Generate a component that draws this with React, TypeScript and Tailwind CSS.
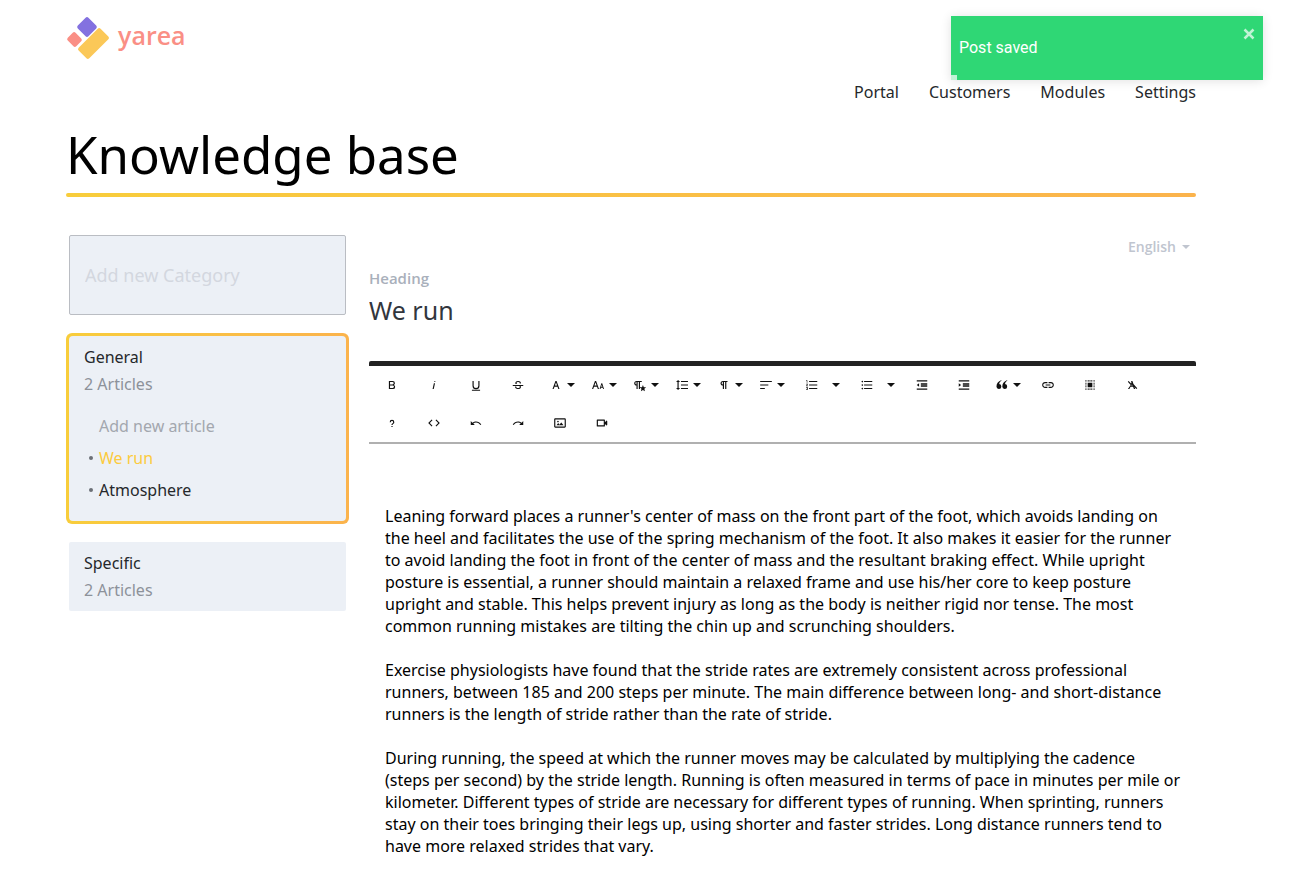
import React, { useState } from 'react';
import {
  MdFormatListNumbered,
  MdFormatListBulleted,
  MdInsertLink,
} from 'react-icons/md';

const glyph = (d: string) => () => (
  <svg viewBox="0 0 24 24" className="size-3.5" fill="currentColor" aria-hidden="true">
    <path d={d} />
  </svg>
);

const Bold = glyph('M15.25,11.8h0A3.68,3.68,0,0,0,17,9a3.93,3.93,0,0,0-3.86-4H6.65V19h7a3.74,3.74,0,0,0,3.7-3.78V15.1A3.64,3.64,0,0,0,15.25,11.8ZM8.65,7h4.2a2.09,2.09,0,0,1,2,1.3,2.09,2.09,0,0,1-1.37,2.61,2.23,2.23,0,0,1-.63.09H8.65Zm4.6,10H8.65V13h4.6a2.09,2.09,0,0,1,2,1.3,2.09,2.09,0,0,1-1.37,2.61A2.23,2.23,0,0,1,13.25,17Z');
const Italic = glyph('M11.76,9h2l-2.2,10h-2Zm1.68-4a1,1,0,1,0,1,1,1,1,0,0,0-1-1Z');
const Underline = glyph('M19,20v2H5V20ZM16,5v8.2a4,4,0,0,1-8,0V5H6v8.2a6,6,0,0,0,12,0V5Z');
const Strike = glyph('M3,12.2H21v1.5H16.63a3.6,3.6,0,0,1,.35,1.6,3.25,3.25,0,0,1-1.31,2.7A5.55,5.55,0,0,1,12.2,19a6.44,6.44,0,0,1-2.62-.54,4.46,4.46,0,0,1-1.89-1.49,3.67,3.67,0,0,1-.67-2.15V14.7H9.02v.11a2.18,2.18,0,0,0,.85,1.83,3.69,3.69,0,0,0,2.33.68,3.39,3.39,0,0,0,2.08-.55,1.73,1.73,0,0,0,.7-1.47,1.7,1.7,0,0,0-.65-1.43l-.27-.17H3ZM16.34,7.06A4.18,4.18,0,0,0,14.62,5.55,5.63,5.63,0,0,0,12.11,5,5.16,5.16,0,0,0,8.75,6.06,3.36,3.36,0,0,0,7.44,8.77a3.23,3.23,0,0,0,.32,1.43h2.6l-.25-.16a1.6,1.6,0,0,1-.65-1.3,1.8,1.8,0,0,1,.69-1.51,3.13,3.13,0,0,1,1.97-.55,3.05,3.05,0,0,1,2.1.67,2.35,2.35,0,0,1,.74,1.83v.11h2V9.17A3.9,3.9,0,0,0,16.34,7.06Z');
const FontFamily = glyph('M16,19h2L13,5H11L6,19H8l1.43-4h5.15Zm-5.86-6L12,7.8,13.86,13Z');
const FontSize = glyph('M20.75,19h1.5l-3-10h-1.5l-3,10h1.5L17,16.5h3Zm-3.3-4,1.05-3.5L19.55,15Zm-5.7,4h2l-5-14h-2l-5,14h2l1.43-4h5.15ZM5.89,13,7.75,7.8,9.61,13Z');
const ParagraphStyle = glyph('M6.15,5A4.11,4.11,0,0,0,2.08,8.18,4,4,0,0,0,6,13v6h2V7h2v12h2V7h3V5ZM4,9a2,2,0,0,1,2-2v4A2,2,0,0,1,4,9ZM17,20.5l3.4,2-.9-3.9,3-2.6-4-.3L17,12l-1.5,3.7-4,.3,3,2.6-.9,3.9Z');
const LineHeight = glyph('M6.25,7h2.5L5.25,3.5,1.75,7h2.5V17H1.75l3.5,3.5L8.75,17H6.25Zm4-2V7h12V5Zm0,14h12V17h-12Zm0-6h12V11h-12Z');
const Pilcrow = glyph('M10.15,5A4.11,4.11,0,0,0,6.08,8.18,4,4,0,0,0,10,13v6h2V7h2V19h2V7h2V5ZM8,9a2,2,0,0,1,2-2v4A2,2,0,0,1,8,9Z');
const AlignLeft = glyph('M2,5h20v2H2ZM2,11h14v2H2ZM2,17h8v2H2Z');
const Outdent = glyph('M3,4H21V6H3ZM3,18H21v2H3ZM10,9H21v2.5H10ZM10,12.5H21V15H10ZM3,12l4-3v6Z');
const Indent = glyph('M3,4H21V6H3ZM3,18H21v2H3ZM10,9H21v2.5H10ZM10,12.5H21V15H10ZM7,12,3,9v6Z');
const Quote = glyph('M10.5,4C6,5.5,2.5,9.5,2.5,14.5a4.2,4.2,0,1,0,4.7-4.2C7.5,8,8.8,6,11.3,4.8ZM20.5,4c-4.5,1.5-8,5.5-8,10.5a4.2,4.2,0,1,0,4.7-4.2c.3-2.3,1.6-4.3,4.1-5.5Z');
const SelectAll = glyph('M8,8h8v8H8ZM4,4h2v2H4ZM8,4h2v2H8ZM11,4h2v2h-2ZM14,4h2v2h-2ZM18,4h2v2h-2ZM4,8h2v2H4ZM4,11h2v2H4ZM4,14h2v2H4ZM18,8h2v2h-2ZM18,11h2v2h-2ZM18,14h2v2h-2ZM4,18h2v2H4ZM8,18h2v2H8ZM11,18h2v2h-2ZM14,18h2v2h-2ZM18,18h2v2h-2Z');
const ClearFormat = glyph('M10.5,5h2.2l1.8,5.2,6.5,7.3L19.5,19l-3.3-3.7L17.5,19h-2.2l-1.5-4.2H9.5L7.5,19H5l4.8-7.2L4.8,6.3,6.3,5l4,4.4,.7-1ZM11.8,11l-1.1,2h2.5Z');
const Help = glyph('M11,17h2v2H11Zm2-1.5H11c0-3.25,3-3,3-5a2,2,0,0,0-4,0H8a4,4,0,0,1,8,0C16,13,13,13.25,13,15.5Z');
const Code = glyph('M9.4,16.6,4.8,12,9.4,7.4,8,6,2,12l6,6Zm5.2,0L19.2,12,14.6,7.4,16,6l6,6-6,6Z');
const Undo = glyph('M10.4 9.4c-1.7.3-3.2.9-4.6 2L3 8.5v7h7l-2.7-2.7c3.7-2.6 8.8-1.8 11.5 1.9.2.3.4.5.5.8l1.8-.9c-2.5-4.3-6.7-5.9-10.7-5.2z');
const Redo = glyph('M13.6 9.4c1.7.3 3.2.9 4.6 2L21 8.5v7h-7l2.7-2.7C13 10.1 7.9 11 5.3 14.7c-.2.3-.4.5-.5.8L3 14.6C5.1 10.8 9.5 8.7 13.6 9.4z');
const Picture = glyph('M14.2,11l3.8,5H6l3-3.9l2.1,2.7L14,11H14.2z M8.5,11c0.8,0,1.5-0.7,1.5-1.5S9.3,8,8.5,8S7,8.7,7,9.5C7,10.3,7.7,11,8.5,11z M22,6v12c0,1.1-0.9,2-2,2H4c-1.1,0-2-0.9-2-2V6c0-1.1,0.9-2,2-2h16C21.1,4,22,4.8,22,6z M20,8.8V6H4v12h16V8.8z');
const Video = glyph('M15,8v8H5V8H15m2,2.5V7a1,1,0,0,0-1-1H4A1,1,0,0,0,3,7V17a1,1,0,0,0,1,1H16a1,1,0,0,0,1-1V13.5l2.29,2.29A1,1,0,0,0,21,15.08V8.91a1,1,0,0,0-1.71-.71Z');

type Tool = { label: string; icon: React.ElementType; kind?: 'menu' | 'split' };

const tools: Tool[] = [
  { label: 'Bold', icon: Bold },
  { label: 'Italic', icon: Italic },
  { label: 'Underline', icon: Underline },
  { label: 'Strikethrough', icon: Strike },
  { label: 'Font family', icon: FontFamily, kind: 'menu' },
  { label: 'Font size', icon: FontSize, kind: 'menu' },
  { label: 'Paragraph style', icon: ParagraphStyle, kind: 'menu' },
  { label: 'Line height', icon: LineHeight, kind: 'menu' },
  { label: 'Paragraph format', icon: Pilcrow, kind: 'menu' },
  { label: 'Align', icon: AlignLeft, kind: 'menu' },
  { label: 'Ordered list', icon: MdFormatListNumbered, kind: 'split' },
  { label: 'Unordered list', icon: MdFormatListBulleted, kind: 'split' },
  { label: 'Decrease indent', icon: Outdent },
  { label: 'Increase indent', icon: Indent },
  { label: 'Quote', icon: Quote, kind: 'menu' },
  { label: 'Insert link', icon: MdInsertLink },
  { label: 'Select all', icon: SelectAll },
  { label: 'Clear formatting', icon: ClearFormat },
  { label: 'Help', icon: Help },
  { label: 'Code view', icon: Code },
  { label: 'Undo', icon: Undo },
  { label: 'Redo', icon: Redo },
  { label: 'Insert image', icon: Picture },
  { label: 'Insert video', icon: Video },
];

const paragraphs = [
  `Leaning forward places a runner's center of mass on the front part of the foot, which avoids landing on
the heel and facilitates the use of the spring mechanism of the foot. It also makes it easier for the runner
to avoid landing the foot in front of the center of mass and the resultant braking effect. While upright
posture is essential, a runner should maintain a relaxed frame and use his/her core to keep posture
upright and stable. This helps prevent injury as long as the body is neither rigid nor tense. The most
common running mistakes are tilting the chin up and scrunching shoulders.`,
  `Exercise physiologists have found that the stride rates are extremely consistent across professional
runners, between 185 and 200 steps per minute. The main difference between long- and short-distance
runners is the length of stride rather than the rate of stride.`,
  `During running, the speed at which the runner moves may be calculated by multiplying the cadence
(steps per second) by the stride length. Running is often measured in terms of pace in minutes per mile or
kilometer. Different types of stride are necessary for different types of running. When sprinting, runners
stay on their toes bringing their legs up, using shorter and faster strides. Long distance runners tend to
have more relaxed strides that vary.`,
];

const Caret = () => (
  <svg viewBox="0 0 8 4" className="w-2 h-1 shrink-0" fill="currentColor" aria-hidden="true">
    <path d="M0 0h8L4 4z" />
  </svg>
);

function ToolButton({ tool }: { tool: Tool }) {
  const Icon = tool.icon;
  if (tool.kind === 'menu') {
    return (
      <button aria-label={tool.label} className="w-[42px] h-[38px] pl-1 flex items-center justify-center gap-1">
        <Icon className="size-3.5" />
        <Caret />
      </button>
    );
  }
  if (tool.kind === 'split') {
    return (
      <div className="w-[55px] h-[38px] flex items-center">
        <button aria-label={tool.label} className="w-[41px] h-full flex items-center justify-center">
          <Icon className="size-3.5" />
        </button>
        <button aria-label={`${tool.label} options`} className="h-full flex items-center">
          <Caret />
        </button>
      </div>
    );
  }
  return (
    <button aria-label={tool.label} className="w-[42px] h-[38px] flex items-center justify-center">
      <Icon className="size-3.5" />
    </button>
  );
}

function Toast({ onClose }: { onClose: () => void }) {
  return (
    <div role="status" className="absolute top-4 right-[29px] w-[312px] h-16 px-2 flex items-center bg-[#2fd775] text-white shadow-[0_1px_10px_rgba(0,0,0,0.12)] font-['Roboto',sans-serif] text-base font-normal">
      Post saved
      <button aria-label="Close" onClick={onClose} className="absolute top-3 right-2 text-white/70">
        <svg viewBox="0 0 12 12" className="size-3" fill="none" stroke="currentColor" strokeWidth="2.5">
          <path d="M1.5 1.5l9 9M10.5 1.5l-9 9" />
        </svg>
      </button>
      <div className="absolute left-0 bottom-0 w-1.5 h-[5px] bg-white/70" />
    </div>
  );
}

export default function App() {
  const [toastOpen, setToastOpen] = useState(true);
  const [heading, setHeading] = useState('We run');

  return (
    <div className="relative min-h-screen bg-white pl-[66px] pr-24 pt-4 font-['Noto_Sans',sans-serif] text-base font-normal text-[#25282b]">
      {toastOpen && <Toast onClose={() => setToastOpen(false)} />}

      <header>
        <a href="#" className="flex w-fit h-11 items-start gap-2 text-[#fa8f85]">
          <svg viewBox="0 0 44 44" className="size-11" aria-hidden="true">
            <rect x="13.5" y="3.5" width="15" height="15" rx="2" fill="#8371e0" transform="rotate(-45 21 11)" />
            <rect x="3" y="17.5" width="11" height="12" rx="2" fill="#fa8f85" transform="rotate(-45 8.5 23.5)" />
            <rect x="12" y="20" width="31" height="15" rx="2" fill="#fbc858" transform="rotate(-45 27.5 27.5)" />
          </svg>
          <span className="font-['Open_Sans',sans-serif] text-[25px] leading-[38px] font-semibold">yarea</span>
        </a>
        <nav className="flex justify-end gap-[30px] mt-5 leading-6">
          <a href="#">Portal</a>
          <a href="#">Customers</a>
          <a href="#">Modules</a>
          <a href="#">Settings</a>
        </nav>
      </header>

      <h1 className="mt-5 h-[69px] text-[51px] leading-[60px] font-normal text-black">Knowledge base</h1>
      <div className="h-1 rounded-full bg-linear-to-r from-[#f8cd3b] to-[#fbb34c]" />

      <div className="mt-[38px] flex gap-5">
        {/* Categories */}
        <aside className="w-[283px] shrink-0">
          <input
            type="text"
            aria-label="Add new Category"
            placeholder="Add new Category"
            className="block mx-[3px] w-[277px] h-20 px-[15px] rounded-xs border border-[#babdc3] bg-[#ecf0f6] text-lg outline-none placeholder:text-[#d3d7df]"
          />
          <section className="mt-[18px] p-[3px] rounded-md bg-linear-to-r from-[#f8cd3b] to-[#fbb34c]">
            <div className="rounded-sm bg-[#ecf0f6] px-[15px] pt-2 pb-[15px]">
              <h2 className="leading-[27px]">General</h2>
              <p className="leading-[27px] text-[#8d929a]">2 Articles</p>
              <button className="block mt-3 ml-[15px] h-8 text-[#a3a7ae]">Add new article</button>
              <ul className="ml-[15px] leading-8">
                <li className="relative text-[#fccb3e]">
                  <span className="absolute -left-2.5 top-3.5 size-1 rounded-full bg-[#6c7077]" />
                  <a href="#">We run</a>
                </li>
                <li className="relative">
                  <span className="absolute -left-2.5 top-3.5 size-1 rounded-full bg-[#6c7077]" />
                  <a href="#">Atmosphere</a>
                </li>
              </ul>
            </div>
          </section>
          <section className="mt-[18px] mx-[3px] px-[15px] pt-2 pb-[7px] rounded-xs bg-[#ecf0f6]">
            <h2 className="leading-[27px]">Specific</h2>
            <p className="leading-[27px] text-[#8d929a]">2 Articles</p>
          </section>
        </aside>

        {/* Article editor */}
        <main className="flex-1 min-w-0">
          <div className="flex justify-end items-center gap-1.5 pr-1.5 h-6 text-[#c0c5cf]">
            <select aria-label="Language" className="appearance-none bg-transparent font-['Open_Sans',sans-serif] text-sm font-semibold outline-none">
              <option>English</option>
            </select>
            <Caret />
          </div>
          <label htmlFor="heading" className="block mt-2 leading-[22px] font-['Open_Sans',sans-serif] text-[15px] font-semibold text-[#a9b0bb]">Heading</label>
          <input
            id="heading"
            value={heading}
            onChange={(e) => setHeading(e.target.value)}
            className="block w-full h-[42px] text-[25px] text-[#32363d] outline-none"
          />

          <div className="mt-[30px] border-t-[5px] border-[#222222] rounded-xs">
            <div className="flex flex-wrap px-0.5 text-[#111111] border-b-2 border-[#b0b0b0]">
              {tools.map(tool => <ToolButton key={tool.label} tool={tool} />)}
            </div>
          </div>

          <article className="pt-[61px] pl-4 space-y-[22px] leading-[22px] text-black whitespace-pre-line">
            {paragraphs.map(text => <p key={text.slice(0, 12)}>{text}</p>)}
          </article>
        </main>
      </div>
    </div>
  );
}
